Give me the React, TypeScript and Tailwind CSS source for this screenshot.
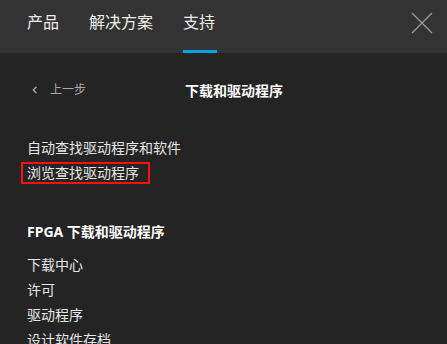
export default function App() {
  const tabs = [
    { label: "产品", active: false },
    { label: "解决方案", active: false },
    { label: "支持", active: true },
  ];

  return (
    <div
      className="h-[344px] w-[447px] overflow-hidden bg-[#242424] text-[#e6e6e6]"
      style={{ fontFamily: '"Noto Sans", "Noto Sans CJK SC", sans-serif' }}
    >
      {/* top bar */}
      <header className="flex h-[53px] items-start bg-[#333333] pl-[27px] pr-[14px]">
        <nav className="flex h-full gap-[30px]">
          {tabs.map((t) => (
            <div
              key={t.label}
              className={
                "flex h-full items-start border-b-[3px] pt-[11px] text-[16px] leading-[22px] text-[#ececec] " +
                (t.active ? "w-[34px] border-[#00a3e0]" : "border-transparent")
              }
            >
              {t.label}
            </div>
          ))}
        </nav>
        <button className="ml-auto mt-[12px] text-[#9a9a9a]">
          <svg width="22" height="22" viewBox="0 0 22 22" fill="none">
            <path d="M1 1L21 21M21 1L1 21" stroke="currentColor" strokeWidth="1.3" />
          </svg>
        </button>
      </header>

      <main className="px-[27px] pt-[27px]">
        {/* back row */}
        <div className="flex h-[20px] items-center text-[12px]">
          <span className="ml-[5px] w-[18px] text-[#a8a8a8]">
            <svg width="6" height="8" viewBox="0 0 6 8" fill="none">
              <path d="M4.5 0.8L1.3 4L4.5 7.2" stroke="currentColor" strokeWidth="1.3" />
            </svg>
          </span>
          <span className="text-[#a8a8a8]">上一步</span>
          <span className="ml-[99px] text-[14px] font-bold text-white">下载和驱动程序</span>
        </div>

        <div className="mt-[35px] text-[14px] leading-[25px]">
          <div>自动查找驱动程序和软件</div>
          <div className="flex h-[25px] items-center">
            <span className="-ml-[6px] inline-flex h-[22px] items-center border-2 border-[#ff1010] pl-[4px] pr-[9px]">
              浏览查找驱动程序
            </span>
          </div>
        </div>

        <div className="mt-[34px] text-[14px] font-bold leading-[25px] text-white">
          FPGA 下载和驱动程序
        </div>

        <ul className="mt-[8px] text-[14px] leading-[25px]">
          <li>下载中心</li>
          <li>许可</li>
          <li>驱动程序</li>
          <li>设计软件存档</li>
        </ul>
      </main>
    </div>
  );
}
